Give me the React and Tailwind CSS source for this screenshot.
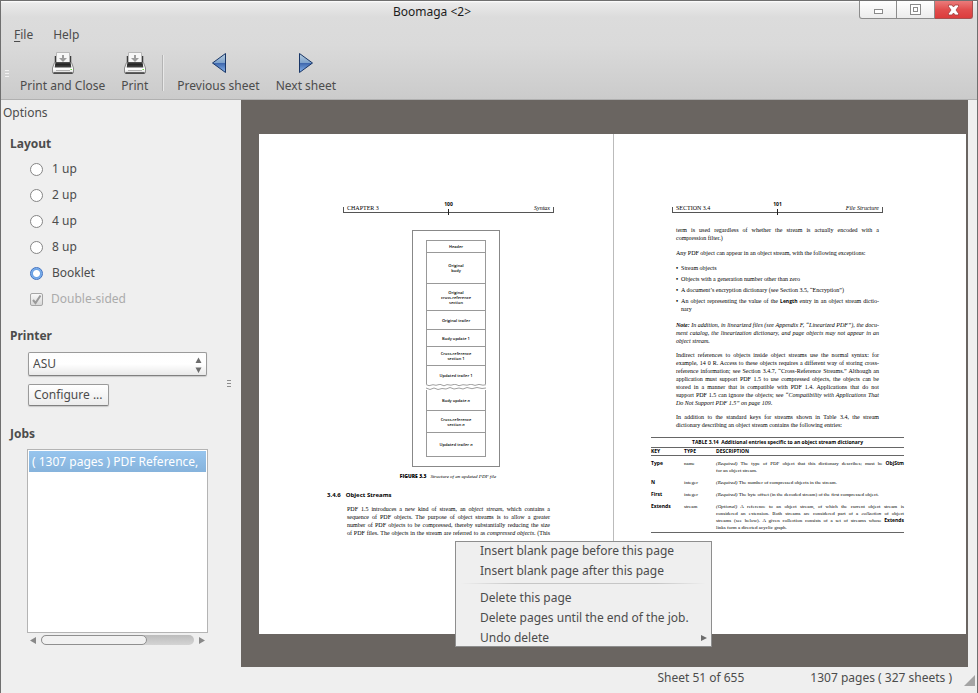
import React from "react";

const SERIF = "font-['Liberation_Serif',serif]";
const SANS = "font-['Open_Sans','Noto_Sans',sans-serif]";

function PrinterIcon() {
  return (
    <svg width="24" height="24" viewBox="0 0 24 24" aria-hidden="true">
      <defs>
        <linearGradient id="body" x1="0" y1="0" x2="0" y2="1">
          <stop offset="0" stopColor="#e8e8e8" />
          <stop offset="0.6" stopColor="#ffffff" />
          <stop offset="1" stopColor="#d0d0d0" />
        </linearGradient>
        <linearGradient id="slot" x1="0" y1="0" x2="0" y2="1">
          <stop offset="0" stopColor="#5a5a5a" />
          <stop offset="0.4" stopColor="#222" />
          <stop offset="1" stopColor="#4a4a4a" />
        </linearGradient>
      </defs>
      <path d="M4.500 5v6M19.500 5v6" stroke="#3c3c3c" strokeWidth="1.500" />
      <path d="M5.500 1.500h13v11h-13z" fill="#f6f6f6" stroke="#b8b8b8" />
      <path d="M11 4h2v3h3l-4 4-4-4h3z" fill="#9c9c9c" />
      <path d="M3.500 11.500L1.500 17v4q0 1.500 1.500 1.500h18q1.500 0 1.500-1.500v-4l-2-5.500z" fill="url(#body)" stroke="#8a8a8a" />
      <path d="M4.500 11h15l.8 5.500H3.700z" fill="url(#slot)" />
      <path d="M5 19.500h14" stroke="#b0b0b0" />
      <path d="M2.500 22h19" stroke="#3a3a3a" strokeWidth="1.500" />
      <path d="M19.500 18.500h1.500" stroke="#6fe040" />
    </svg>
  );
}

function ArrowIcon({ flip }) {
  return (
    <svg width="24" height="24" viewBox="0 0 24 24" aria-hidden="true" className={flip ? "-scale-x-100" : ""}>
      <defs>
        <linearGradient id="arrow" x1="0" y1="0" x2="0" y2="1">
          <stop offset="0" stopColor="#b9cfe0" />
          <stop offset="0.48" stopColor="#7fa3cc" />
          <stop offset="0.52" stopColor="#3f68ae" />
          <stop offset="1" stopColor="#8ab8f0" />
        </linearGradient>
      </defs>
      <path d="M5.500 2.500L18.500 12 5.500 21.500z" fill="url(#arrow)" stroke="#183566" strokeLinejoin="round" />
    </svg>
  );
}

function ToolButton({ label, children }) {
  return (
    <button className="flex flex-col items-center px-2">
      {children}
      <span className="h-5 leading-[22px]">{label}</span>
    </button>
  );
}

function Grip({ className }) {
  return (
    <span className={"flex w-1 flex-col gap-[2px] " + className}>
      <i className="h-px bg-current" />
      <i className="h-px bg-current" />
      <i className="h-px bg-current" />
    </span>
  );
}

const winBtn = "flex h-[18px] w-[38px] items-center justify-center border-r border-b border-[#8c8c8c] bg-linear-to-b from-white to-[#ececec]";

function Header() {
  return (
    <header className="flex h-[99px] flex-col border-b border-[#b0b0b0] bg-[linear-gradient(#ffffff_0px,#eaeaea_2px,#dcdcdc_16px,#dadada_44px,#cbcbcb_98px)]">
      <div className="flex h-[22px] items-start">
        <h1 className="flex-1 pt-[2px] pl-1 text-center leading-[18px] text-[#1c1c1c]">Boomaga &lt;2&gt;</h1>
        <div className="mr-1 flex">
          <button aria-label="Minimize" className={winBtn + " rounded-bl-[3px] border-l"}>
            <i className="mt-1 h-[5px] w-[9px] border border-[#8a8a8a] bg-white" />
          </button>
          <button aria-label="Maximize" className={winBtn}>
            <i className="flex size-[11px] items-center justify-center border border-[#8a8a8a] bg-white">
              <i className="size-[5px] border border-[#8a8a8a]" />
            </i>
          </button>
          <button
            aria-label="Close"
            className="flex h-[18px] w-[38px] items-center justify-center rounded-br-[3px] border-r border-b border-[#a85050] bg-linear-to-b from-[#ea7b7b] via-[#e14e4e] to-[#dc3c3c]"
          >
            <svg width="13" height="12" viewBox="0 0 13 12">
              <path d="M1.500 1h3.500l1.500 2L8 1h3.500v1.500L9 6l2.500 3.500V11H8L6.500 9 5 11H1.500V9.500L4 6 1.500 2.500z" fill="#fff" stroke="#a03c3c" strokeWidth="0.800" />
            </svg>
          </button>
        </div>
      </div>
      <nav className="flex h-6 gap-5 pl-[13px] leading-6">
        <button><span className="underline underline-offset-2">F</span>ile</button>
        <button>Help</button>
      </nav>
      <div className="flex h-[50px] items-start pt-1 pl-1">
        <Grip className="mt-[19px] mr-[3px] text-[#f2f2f2]" />
        <ToolButton label="Print and Close"><PrinterIcon /></ToolButton>
        <ToolButton label="Print"><PrinterIcon /></ToolButton>
        <i className="mt-1 mr-[5px] ml-[6px] h-9 w-[2px] border-l border-[#b4b4b4] bg-[#e8e8e8]" />
        <ToolButton label="Previous sheet"><ArrowIcon flip /></ToolButton>
        <ToolButton label="Next sheet"><ArrowIcon /></ToolButton>
      </div>
    </header>
  );
}

function LayoutOption({ label, checked }) {
  return (
    <label className="flex h-[26px] items-center gap-[9px]">
      <input
        type="radio"
        name="layout"
        defaultChecked={checked}
        className="size-[13px] appearance-none rounded-full border border-[#858585] bg-white checked:border-[#3f6fc0] checked:bg-[radial-gradient(circle,#ffffff_0_3px,#6aa0e4_4px,#8fc0f2_6px)]"
      />
      {label}
    </label>
  );
}

function Sidebar() {
  return (
    <aside className="flex w-60 shrink-0">
      <div className="flex min-w-0 flex-1 flex-col">
        <h2 className="h-6 pl-[2px] leading-[26px]">Options</h2>
        <div className="flex flex-1 flex-col pl-[9px]">
          <h3 className="pt-2 leading-6 font-bold">Layout</h3>
          <div className="pl-5">
            <LayoutOption label="1 up" />
            <LayoutOption label="2 up" />
            <LayoutOption label="4 up" />
            <LayoutOption label="8 up" />
            <LayoutOption label="Booklet" checked />
            <label className="flex h-[26px] items-center gap-2 text-[#ababab]">
              <span className="grid">
                <input type="checkbox" disabled defaultChecked className="col-start-1 row-start-1 size-[13px] appearance-none rounded-[2px] border border-[#a5a5a5] bg-linear-to-b from-[#f8f8f8] to-[#d8d8d8]" />
                <svg className="col-start-1 row-start-1" width="13" height="13" viewBox="0 0 13 13">
                  <path d="M3 7l2.500 3L10.500 2.500" fill="none" stroke="#9a9a9a" strokeWidth="2" />
                </svg>
              </span>
              Double-sided
            </label>
          </div>
          <h3 className="pt-3 leading-6 font-bold"><label htmlFor="printer">Printer</label></h3>
          <div className="flex flex-col items-start gap-2 pt-1 pl-[18px]">
            <div className="grid w-[179px]">
              <select id="printer" className="col-start-1 row-start-1 h-6 appearance-none rounded-[2px] border border-[#9a9a9a] border-b-[#808080] bg-linear-to-b from-[#fdfdfd] via-white to-[#e9e9e9] pl-1 shadow-[0_1px_1px_#c8c8c8]">
                <option>ASU</option>
              </select>
              <svg className="pointer-events-none col-start-1 row-start-1 mt-[2px] mr-[5px] self-center justify-self-end" width="7" height="16" viewBox="0 0 7 16">
                <path d="M3.500 0.500L6.500 6h-6zM3.500 16L6.500 10.500h-6z" fill="#6c6c6c" />
              </svg>
            </div>
            <button className="h-[22px] rounded-[2px] border border-[#9a9a9a] border-b-[#808080] bg-linear-to-b from-white to-[#ececec] px-[5px] leading-5 shadow-[0_1px_1px_#c8c8c8]">Configure ...</button>
          </div>
          <h3 className="pt-4 leading-6 font-bold" id="jobs">Jobs</h3>
          <div className="mt-[3px] ml-[17px] flex flex-1 flex-col">
            <div role="listbox" aria-labelledby="jobs" className="w-[181px] flex-1 border border-[#b4b4b4] bg-white p-px">
              <div role="option" aria-selected="true" className="h-[21px] overflow-hidden bg-linear-to-b from-[#97c5ee] to-[#86b3dc] pl-[3px] leading-[21px] whitespace-nowrap text-white">
                ( 1307 pages ) PDF Reference,
              </div>
            </div>
            <div className="mt-[2px] mb-[22px] flex w-[181px] items-center justify-between px-[3px]">
              <button aria-label="Scroll left"><svg width="6" height="7" viewBox="0 0 6 7" className="block"><path d="M6 0v7L0 3.500z" fill="#888" /></svg></button>
              <span className="flex h-[10px] w-[153px] rounded-full bg-linear-to-b from-[#bcbcbc] to-[#d4d4d4]">
                <i className="w-[106px] rounded-full border border-[#8f8f8f] bg-[#f1f1f1]" />
              </span>
              <button aria-label="Scroll right"><svg width="6" height="7" viewBox="0 0 6 7" className="block"><path d="M0 0v7L6 3.500z" fill="#888" /></svg></button>
            </div>
          </div>
        </div>
      </div>
      <Grip className="mr-[10px] self-center text-[#8d8d8d]" />
    </aside>
  );
}

/* One typeset line; full lines stretch to both margins. */
function L({ children, end }) {
  return <span className={"block whitespace-nowrap text-justify " + (end ? "" : "[text-align-last:justify]")}>{children}</span>;
}

function Key({ children }) {
  return <b className={"text-[5px] leading-none " + SANS}>{children}</b>;
}

function RunningHead({ left, page, right }) {
  return (
    <div className="w-[211px]">
      <div className={"text-center text-[5px] leading-[6px] font-bold " + SANS}>{page}</div>
      <div className="grid h-[6px] grid-cols-[1fr_auto_1fr] border-x border-b border-[#555] px-[3px] leading-[3px]">
        <span>{left}</span>
        <span className="mt-[2px] h-[6px] w-px bg-[#222]" />
        <i className="text-right">{right}</i>
      </div>
    </div>
  );
}

function Cell({ className, children }) {
  return <div className={"flex flex-col items-center justify-center border-b border-[#999] " + className}>{children}</div>;
}

function LeftPage() {
  return (
    <section className="border-r border-[#bbb] pl-[68px]">
      <div className="pt-[67px] pl-4"><RunningHead left="CHAPTER 3" page="100" right="Syntax" /></div>
      <figure className="mt-[17px] ml-[85px] w-[88px]">
        <div className={"border border-[#888] px-[13px] pt-[9px] pb-[9px] text-[4px] leading-[5px] font-semibold " + SANS}>
          <div className="border-x border-t border-[#999] bg-white">
            <Cell className="h-3">Header</Cell>
            <Cell className="h-[31px]"><span>Original</span><span>body</span></Cell>
            <Cell className="h-[27px]"><span>Original</span><span className="whitespace-nowrap">cross-reference</span><span>section</span></Cell>
            <Cell className="h-[19px]">Original trailer</Cell>
            <Cell className="h-[17px]">Body update 1</Cell>
            <Cell className="h-[19px]"><span>Cross-reference</span><span>section 1</span></Cell>
            <div className="flex h-[18px] items-center justify-center">Updated trailer 1</div>
          </div>
          <svg className="block" width="60" height="6" viewBox="0 0 60 6" fill="none" stroke="#777" strokeWidth="0.700">
            <path d="M0 .500l3 1.200 4-1 3 .6 4-1 4 1.500 3-1.200 4 .6 4-1 4 1.500 4-1 4 .500 4-1 4 1.200 4-1 4 .8 3-.5M0 4l4 1.500 4-1.500 4 1.500 4-1 4 .500 4-1.500 4 1.500 5-1 4 1 4-1.500 5 1.200 5-1.200 5 1 4-.5" />
          </svg>
          <div className="border-x border-[#999]">
            <Cell className="h-[21px]"><span>Body update <i>n</i></span></Cell>
            <Cell className="h-[22px]"><span>Cross-reference</span><span>section <i>n</i></span></Cell>
            <Cell className="h-6"><span>Updated trailer <i>n</i></span></Cell>
          </div>
        </div>
        <figcaption className="-mr-5 -ml-9 flex justify-center gap-1 pt-[6px] text-[5px] leading-[7px] whitespace-nowrap">
          <b className={"font-extrabold " + SANS}>FIGURE 3.3</b>
          <i>Structure of an updated PDF file</i>
        </figcaption>
      </figure>
      <h4 className={"flex gap-[5px] pt-[11px] leading-[8px] font-bold " + SANS}>
        <span>3.4.6</span><span>Object Streams</span>
      </h4>
      <p className="mt-[6px] ml-5 w-[203px]">
        <L>PDF 1.5 introduces a new kind of stream, an <i>object stream</i>, which contains a</L>
        <L>sequence of PDF objects. The purpose of object streams is to allow a greater</L>
        <L>number of PDF objects to be compressed, thereby substantially reducing the size</L>
        <L>of PDF files. The objects in the stream are referred to as <i>compressed objects</i>. (This</L>
      </p>
    </section>
  );
}

function Row({ k, type, children }) {
  return (
    <tr className="align-top">
      <th className={"pb-[5px] text-left font-bold " + SANS}>{k}</th>
      <td>{type}</td>
      <td className="pb-[5px]">{children}</td>
    </tr>
  );
}

function RightPage() {
  return (
    <section className="pl-[37px]">
      <div className="pt-[67px] pl-[21px]"><RunningHead left="SECTION 3.4" page="101" right="File Structure" /></div>
      <div className="mt-[13px] ml-[25px] w-[203px]">
        <p><L>term is used regardless of whether the stream is actually encoded with a</L><L end>compression filter.)</L></p>
        <p className="mt-[7px]"><L end>Any PDF object can appear in an object stream, with the following exceptions:</L></p>
        <ul className="mt-[7px] flex list-none flex-col gap-[3px]">
          <li className="flex gap-[3px]"><b>•</b><span>Stream objects</span></li>
          <li className="flex gap-[3px]"><b>•</b><span>Objects with a generation number other than zero</span></li>
          <li className="flex gap-[3px]"><b>•</b><span>A document’s encryption dictionary (see Section 3.5, “Encryption”)</span></li>
          <li className="flex gap-[3px]">
            <b>•</b>
            <span className="flex-1"><L>An object representing the value of the <Key>Length</Key> entry in an object stream dictio-</L><L end>nary</L></span>
          </li>
        </ul>
        <p className="mt-2 italic">
          <L><b>Note:</b> In addition, in linearized files (see Appendix F, “Linearized PDF”), the docu-</L>
          <L>ment catalog, the linearization dictionary, and page objects may not appear in an</L>
          <L end>object stream.</L>
        </p>
        <p className="mt-[6px]">
          <L>Indirect references to objects inside object streams use the normal syntax: for</L>
          <L>example, 14 0 R. Access to these objects requires a different way of storing cross-</L>
          <L>reference information; see Section 3.4.7, “Cross-Reference Streams.” Although an</L>
          <L>application must support PDF 1.5 to use compressed objects, the objects can be</L>
          <L>stored in a manner that is compatible with PDF 1.4. Applications that do not</L>
          <L>support PDF 1.5 can ignore the objects; see <i>“Compatibility with Applications That</i></L>
          <L end><i>Do Not Support PDF 1.5” on page 109</i>.</L>
        </p>
        <p className="mt-[6px]">
          <L>In addition to the standard keys for streams shown in Table 3.4, the stream</L>
          <L end>dictionary describing an object stream contains the following entries:</L>
        </p>
      </div>
      <table className="mt-2 w-[253px] table-fixed border-collapse border-b border-[#666] text-[5px] leading-[7px]">
        <caption className={"border-y border-[#666] py-px text-center font-bold " + SANS}>TABLE 3.14&nbsp; Additional entries specific to an object stream dictionary</caption>
        <thead>
          <tr className={"border-b border-[#666] text-left " + SANS}>
            <th className="w-[33px]">KEY</th>
            <th className="w-8">TYPE</th>
            <th>DESCRIPTION</th>
          </tr>
        </thead>
        <tbody>
          <tr className="h-1"><td colSpan="3" /></tr>
          <Row k="Type" type="name">
            <L><i>(Required)</i> The type of PDF object that this dictionary describes; must be <Key>ObjStm</Key></L>
            <L end>for an object stream.</L>
          </Row>
          <Row k="N" type="integer"><L end><i>(Required)</i> The number of compressed objects in the stream.</L></Row>
          <Row k="First" type="integer"><L end><i>(Required)</i> The byte offset (in the decoded stream) of the first compressed object.</L></Row>
          <tr className="align-top">
            <th className={"pb-px text-left font-bold " + SANS}>Extends</th>
            <td>stream</td>
            <td className="pb-px">
              <L><i>(Optional)</i> A reference to an object stream, of which the current object stream is</L>
              <L>considered an extension. Both streams are considered part of a <i>collection</i> of object</L>
              <L>streams (see below). A given collection consists of a set of streams whose <Key>Extends</Key></L>
              <L end>links form a directed acyclic graph.</L>
            </td>
          </tr>
        </tbody>
      </table>
    </section>
  );
}

function ContextMenu() {
  const item = "flex h-5 w-full shrink-0 items-center pr-1 pb-[2px] pl-6 text-left whitespace-nowrap";
  return (
    <div role="menu" className="absolute top-[441px] left-[214px] flex h-[106px] w-[257px] flex-col border border-[#8e8e8e] bg-[#efefef]">
      <button role="menuitem" className={item}>Insert blank page before this page</button>
      <button role="menuitem" className={item}>Insert blank page after this page</button>
      <hr className="mt-px mb-[5px] h-px shrink-0 border-0 bg-[linear-gradient(90deg,transparent_5px,#c6c6c6_60px,#c6c6c6_200px,transparent_250px)]" />
      <button role="menuitem" className={item}>Delete this page</button>
      <button role="menuitem" className={item}>Delete pages until the end of the job.</button>
      <button role="menuitem" className={item + " justify-between"}>
        Undo delete
        <svg width="6" height="6" viewBox="0 0 6 6"><path d="M0 0v6L6 3z" fill="#6c6c6c" /></svg>
      </button>
    </div>
  );
}

export default function App() {
  return (
    <div className="flex min-h-screen flex-col border-x border-t border-[#6f6f6f] bg-[#efefef] font-['Noto_Sans',sans-serif] text-[12px] text-[#4c4c4c]">
      <Header />
      <main className="flex flex-1">
        <Sidebar />
        <div className="relative mr-[9px] flex flex-1 flex-col bg-[#6a6561] pt-[34px] pr-[2px] pb-[33px] pl-[18px]">
          <div className={"grid flex-1 grid-cols-[355fr_352fr] bg-white text-[6px] leading-[8px] text-black " + SERIF}>
            <LeftPage />
            <RightPage />
          </div>
          <ContextMenu />
        </div>
      </main>
      <footer className="flex h-[26px] items-start justify-end leading-[22px]">
        <span>Sheet 51 of 655</span>
        <span className="ml-[66px]">1307 pages ( 327 sheets )</span>
        <svg className="mt-2 mr-[2px] ml-3" width="11" height="11" viewBox="0 0 11 11"><path d="M11 0v11H0z" fill="#a4a4a4" /></svg>
      </footer>
    </div>
  );
}
